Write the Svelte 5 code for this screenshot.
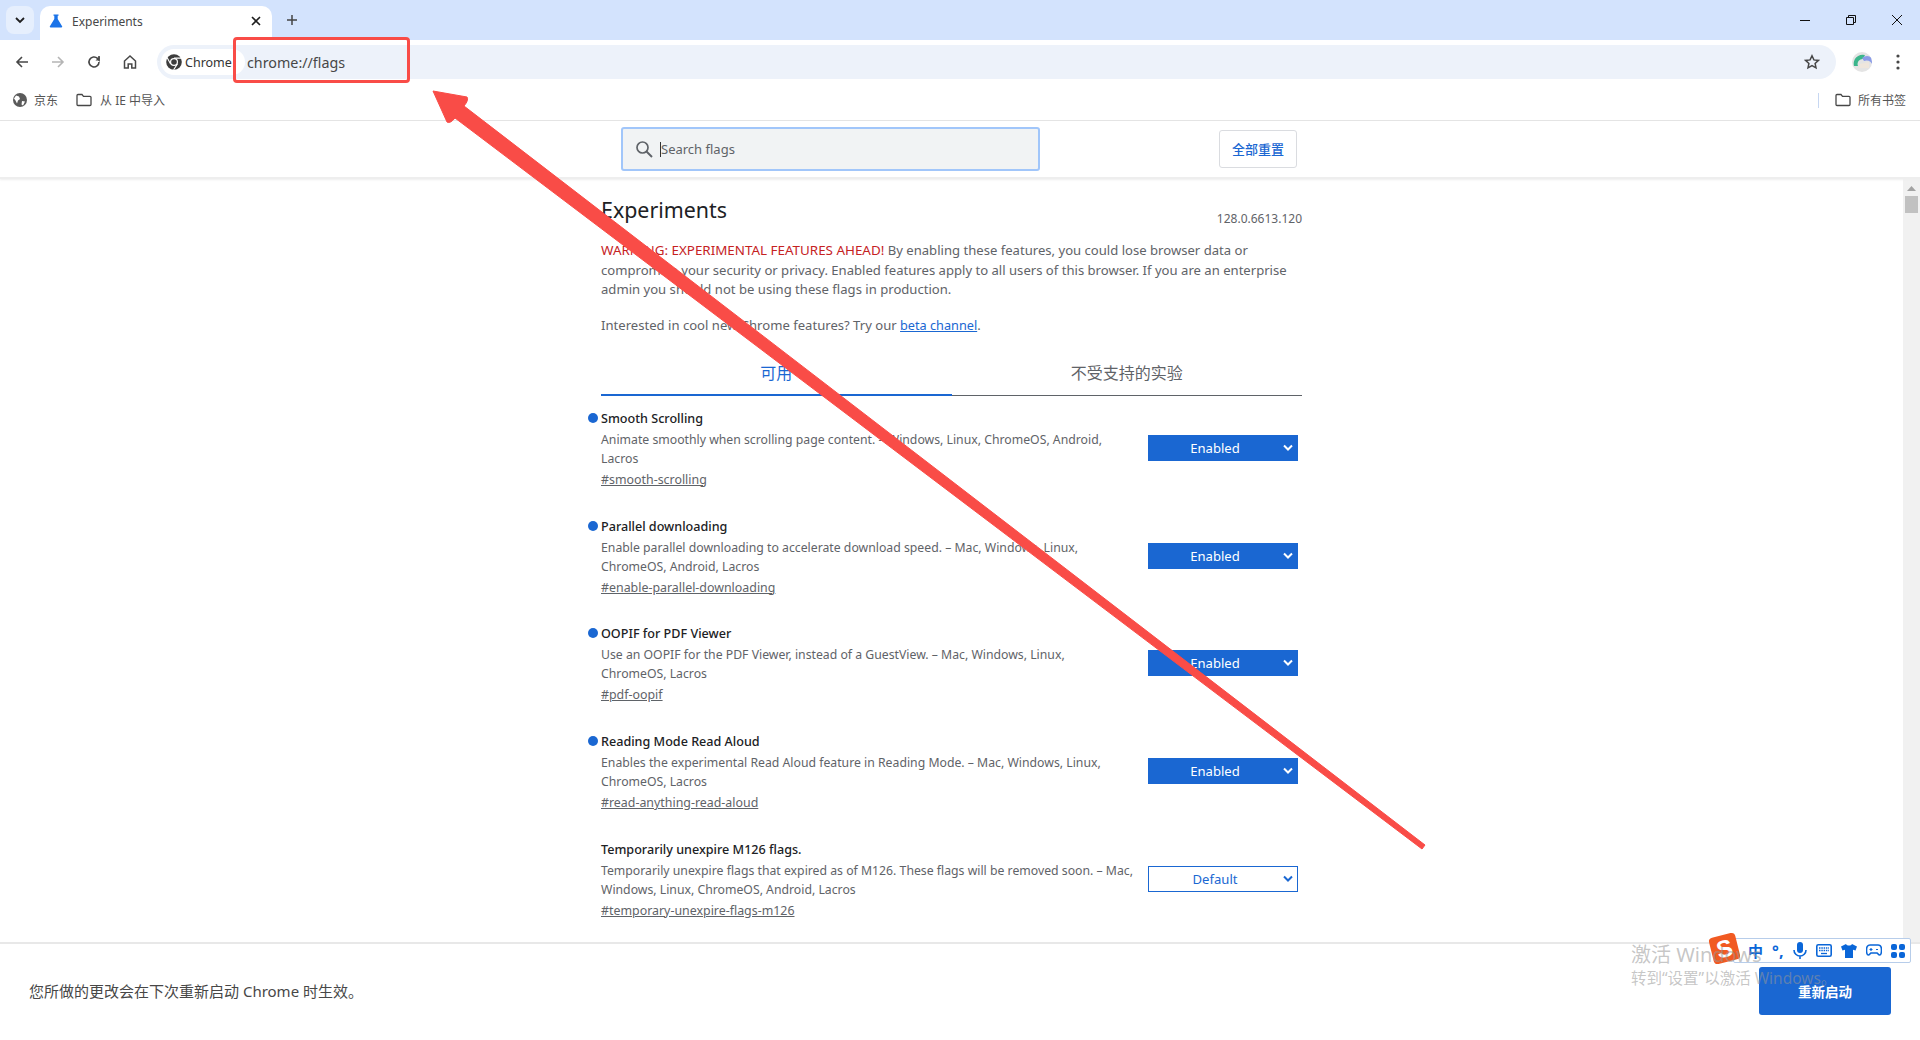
<script>
	const flags = [
		{ name: 'Smooth Scrolling', on: true, desc: 'Animate smoothly when scrolling page content. – Windows, Linux, ChromeOS, Android, Lacros', link: '#smooth-scrolling' },
		{ name: 'Parallel downloading', on: true, desc: 'Enable parallel downloading to accelerate download speed. – Mac, Windows, Linux, ChromeOS, Android, Lacros', link: '#enable-parallel-downloading' },
		{ name: 'OOPIF for PDF Viewer', on: true, desc: 'Use an OOPIF for the PDF Viewer, instead of a GuestView. – Mac, Windows, Linux,\nChromeOS, Lacros', link: '#pdf-oopif' },
		{ name: 'Reading Mode Read Aloud', on: true, desc: 'Enables the experimental Read Aloud feature in Reading Mode. – Mac, Windows, Linux, ChromeOS, Lacros', link: '#read-anything-read-aloud' },
		{ name: 'Temporarily unexpire M126 flags.', on: false, desc: 'Temporarily unexpire flags that expired as of M126. These flags will be removed soon. – Mac, Windows, Linux, ChromeOS, Android, Lacros', link: '#temporary-unexpire-flags-m126' }
	];
</script>

<div class="window">
	<div class="tabstrip">
		<div class="tabsearch">
			<svg width="12" height="12" viewBox="0 0 12 12"><path d="M2 4l4 4 4-4" fill="none" stroke="#1f1f1f" stroke-width="1.8"/></svg>
		</div>
		<div class="tab">
			<svg width="14" height="14" viewBox="0 0 14 14"><path d="M4.500 0.500h5v1.200h-.8v3.400l4.400 7.200c.4.700 0 1.200-.7 1.200H1.600c-.7 0-1.100-.5-.7-1.200l4.400-7.200V1.700h-.8z" fill="#1a73e8"/></svg>
			<span class="tabtitle">Experiments</span>
			<svg width="12" height="12" viewBox="0 0 12 12"><path d="M2 2l8 8M10 2l-8 8" stroke="#1f1f1f" stroke-width="1.600"/></svg>
		</div>
		<svg class="newtab" width="12" height="12" viewBox="0 0 12 12"><path d="M6 1v10M1 6h10" stroke="#444" stroke-width="1.500"/></svg>
		<div class="wincontrols">
			<svg width="12" height="12" viewBox="0 0 12 12"><path d="M1 6.500h10" stroke="#111" stroke-width="1"/></svg>
			<svg width="12" height="12" viewBox="0 0 12 12"><path d="M1.500 3.500h7v7h-7zM3.500 3.500v-2h7v7h-2" fill="none" stroke="#111" stroke-width="1"/></svg>
			<svg width="12" height="12" viewBox="0 0 12 12"><path d="M1 1l10 10M11 1L1 11" stroke="#111" stroke-width="1"/></svg>
		</div>
	</div>

	<div class="toolbar">
		<div class="navicons">
			<svg width="16" height="16" viewBox="0 0 16 16"><path d="M14 8H3M8 3L3 8l5 5" fill="none" stroke="#474747" stroke-width="1.600"/></svg>
			<svg width="16" height="16" viewBox="0 0 16 16"><path d="M2 8h11M8 3l5 5-5 5" fill="none" stroke="#b5b5b5" stroke-width="1.600"/></svg>
			<svg width="16" height="16" viewBox="0 0 16 16"><path d="M13 8a5 5 0 1 1-1.500-3.600L13 6V2" fill="none" stroke="#474747" stroke-width="1.600"/><path d="M13.600 6.600H9.500l4.100-4.100z" fill="#474747"/></svg>
			<svg width="16" height="16" viewBox="0 0 16 16"><path d="M8 2L2.500 7v7h3.700v-4h3.600v4h3.700V7z" fill="none" stroke="#474747" stroke-width="1.500"/></svg>
		</div>
		<div class="omnibox">
			<div class="chip">
				<svg width="16" height="16" viewBox="0 0 16 16"><circle cx="8" cy="8" r="7.800" fill="#3c3c3c"/><circle cx="8" cy="8" r="4" fill="#fff"/><circle cx="8" cy="8" r="2.800" fill="#3c3c3c"/><path d="M8 4.100h7.500M4.600 10L1.200 3.800M11.400 10L7.600 15.800" stroke="#fff" stroke-width="1.100"/></svg>
				<span>Chrome</span>
			</div>
			<span class="url">chrome://flags</span>
			<svg class="star" width="16" height="16" viewBox="0 0 16 16"><path d="M8 1.800l1.900 4.100 4.500.5-3.300 3 .9 4.500L8 11.700l-4 2.200.9-4.500-3.300-3 4.500-.5z" fill="none" stroke="#474747" stroke-width="1.500"/></svg>
		</div>
		<svg class="avatar" width="20" height="20" viewBox="0 0 20 20">
			<defs><clipPath id="av"><circle cx="10" cy="10" r="10"/></clipPath></defs>
			<g clip-path="url(#av)">
				<rect width="20" height="20" fill="#e4e4e4"/>
				<path d="M2 14a9 9 0 0 1 11-11l-2 4a5 5 0 0 0-5 7z" fill="#3cb68c"/>
				<path d="M10 6a8 8 0 0 1 10 0v6a6 6 0 0 0-8-3z" fill="#8a9be8"/>
				<path d="M8 12l9-2v6H7z" fill="#efe6dc"/>
			</g>
		</svg>
		<svg class="dots" width="4" height="16" viewBox="0 0 4 16"><circle cx="2" cy="2" r="1.600" fill="#474747"/><circle cx="2" cy="8" r="1.600" fill="#474747"/><circle cx="2" cy="14" r="1.600" fill="#474747"/></svg>
	</div>

	<div class="bookmarks">
		<div class="bm">
			<svg width="14" height="14" viewBox="0 0 14 14"><circle cx="7" cy="7" r="7" fill="#5a5a5a"/><path d="M3 2.500l3 1 1 2.500-2 1.500-1 3-1.500-3-1.500-2zM9 8l3 .5-2 4-1.500-1z" fill="#fff"/></svg>
			<span>京东</span>
		</div>
		<div class="bm">
			<svg width="16" height="14" viewBox="0 0 16 14"><path d="M1 2.500c0-.6.4-1 1-1h4l1.500 1.800H14c.6 0 1 .4 1 1V11.500c0 .6-.4 1-1 1H2c-.6 0-1-.4-1-1z" fill="none" stroke="#474747" stroke-width="1.300"/></svg>
			<span class="ie">从 IE 中导入</span>
		</div>
		<div class="bmright">
			<i class="bmsep"></i>
			<div class="bm">
				<svg width="16" height="14" viewBox="0 0 16 14"><path d="M1 2.500c0-.6.4-1 1-1h4l1.500 1.800H14c.6 0 1 .4 1 1V11.500c0 .6-.4 1-1 1H2c-.6 0-1-.4-1-1z" fill="none" stroke="#474747" stroke-width="1.300"/></svg>
				<span>所有书签</span>
			</div>
		</div>
	</div>

	<div class="flagshead">
		<div class="searchbox">
			<svg width="18" height="18" viewBox="0 0 18 18"><circle cx="7.500" cy="7.500" r="5.500" fill="none" stroke="#5f6368" stroke-width="1.700"/><path d="M11.500 11.500l5.500 5.500" stroke="#5f6368" stroke-width="1.900"/></svg>
			<i class="caret"></i>
			<span>Search flags</span>
		</div>
		<button class="resetall">全部重置</button>
	</div>

	<div class="body">
		<div class="content">
			<div class="column">
				<div class="titlerow">
					<h1>Experiments</h1>
					<span class="version">128.0.6613.120</span>
				</div>
				<p class="warning"><span class="red">WARNING: EXPERIMENTAL FEATURES AHEAD!</span> By enabling these features, you could lose browser data or compromise your security or privacy. Enabled features apply to all users of this browser. If you are an enterprise admin you should not be using these flags in production.</p>
				<p class="beta">Interested in cool new Chrome features? Try our <a href="#beta">beta channel</a>.</p>
				<div class="tabs">
					<div class="pagetab active">可用</div>
					<div class="pagetab">不受支持的实验</div>
				</div>
				{#each flags as flag}
					<div class="flag">
						<div class="flagtext">
							<div class="flagname" class:dot={flag.on}>{flag.name}</div>
							<div class="flagdesc">{flag.desc}</div>
							<a class="flaglink" href={flag.link}>{flag.link}</a>
						</div>
						<div class="select" class:enabled={flag.on}>
							<span>{flag.on ? 'Enabled' : 'Default'}</span>
							<svg width="10" height="8" viewBox="0 0 10 8"><path d="M1 1.500l4 4 4-4" fill="none" stroke="currentColor" stroke-width="2"/></svg>
						</div>
					</div>
				{/each}
			</div>
		</div>
		<div class="scrollbar">
			<svg width="9" height="5" viewBox="0 0 9 5"><path d="M4.500 0L9 5H0z" fill="#a3a3a3"/></svg>
			<div class="thumb"></div>
		</div>
	</div>

	<div class="needsrestart">
		<span class="restartmsg">您所做的更改会在下次重新启动 Chrome 时生效。</span>
		<button class="relaunch">重新启动</button>
	</div>

	<!-- annotation drawn on top of the screenshot -->
	<div class="redbox"></div>
	<svg class="arrow" width="1920" height="1040" viewBox="0 0 1920 1040">
		<path d="M433 91L467 97 Q469 100 464 106 L1425 845 1422 849 455 118 Q450 124 447 122 Z" fill="#f94c47" stroke="#f94c47" stroke-width="1" stroke-linejoin="round"/>
	</svg>

	<div class="imebar">
		<span class="imezh">中</span>
		<span class="imepunct">°,</span>
		<svg width="14" height="18" viewBox="0 0 14 18"><rect x="4" y="0" width="6" height="11" rx="3" fill="#0a66d8"/><path d="M1 8a6 6 0 0 0 12 0M7 14v3" fill="none" stroke="#0a66d8" stroke-width="1.600"/></svg>
		<svg width="16" height="13" viewBox="0 0 16 13"><rect x=".8" y=".8" width="14.400" height="11.400" rx="1.500" fill="none" stroke="#0a66d8" stroke-width="1.600"/><path d="M3 4h10M3 6.500h10" stroke="#0a66d8" stroke-width="1.300" stroke-dasharray="1.500 .8"/><path d="M5 9.500h6" stroke="#0a66d8" stroke-width="1.300"/></svg>
		<svg width="16" height="14" viewBox="0 0 16 14"><path d="M5 0L0 2.500l1.500 4L4 5.800V14h8V5.800l2.500.7 1.500-4L11 0C10 2 6 2 5 0z" fill="#0a66d8"/></svg>
		<svg width="16" height="14" viewBox="0 0 16 14"><path d="M4 1h8c2.500 0 3.500 2 3.500 5s-.5 5-2 5c-1 0-1.500-1.500-2.500-2H5c-1 .5-1.500 2-2.500 2s-2-2-2-5S1.500 1 4 1z" fill="none" stroke="#0a66d8" stroke-width="1.600"/><path d="M3.500 5.500h3M5 4v3M10 5.500h2" stroke="#0a66d8" stroke-width="1.200"/></svg>
		<svg width="14" height="14" viewBox="0 0 14 14"><rect width="6" height="6" rx="2" fill="#0a66d8"/><rect x="8" width="6" height="6" rx="2" fill="#0a66d8"/><rect y="8" width="6" height="6" rx="2" fill="#0a66d8"/><rect x="8" y="8" width="6" height="6" rx="2" fill="#0a66d8"/></svg>
	</div>

	<div class="sogou"><span>S</span></div>

	<div class="watermark">
		<div class="wm1">激活 Windows</div>
		<div class="wm2">转到“设置”以激活 Windows。</div>
	</div>
</div>

<style>
	:global(body) {
		margin: 0;
		background: #fff;
	}

	.window {
		position: relative;
		display: flex;
		flex-direction: column;
		width: 1920px;
		height: 1040px;
		overflow: hidden;
		font-family: "Noto Sans", "Noto Sans CJK SC", sans-serif;
		color: #5f6368;
	}

	.tabstrip {
		display: flex;
		align-items: flex-end;
		height: 40px;
		padding-left: 6px;
		background: #d3e3fd;
		flex: none;
	}

	.tabsearch {
		display: flex;
		align-items: center;
		justify-content: center;
		width: 28px;
		height: 28px;
		margin-bottom: 6px;
		border-radius: 8px;
		background: #e6effd;
	}

	.tab {
		display: flex;
		align-items: center;
		width: 232px;
		height: 34px;
		margin-left: 6px;
		padding: 0 10px 4px 9px;
		box-sizing: border-box;
		background: #fff;
		border-radius: 10px 10px 0 0;
	}

	.tabtitle {
		flex: 1;
		margin-left: 9px;
		font-size: 12px;
		color: #474747;
	}

	.newtab {
		margin: 0 0 14px 14px;
	}

	.wincontrols {
		display: flex;
		gap: 34px;
		margin-left: auto;
		padding: 0 17px 14px 0;
	}

	.toolbar {
		display: flex;
		align-items: center;
		height: 40px;
		flex: none;
		background: #fff;
		padding-left: 14px;
		box-sizing: border-box;
	}

	.navicons {
		display: flex;
		gap: 20px;
		width: 143px;
		margin-top: 4px;
	}

	.omnibox {
		display: flex;
		align-items: center;
		width: 1679px;
		height: 34px;
		margin-top: 4px;
		padding-left: 4px;
		box-sizing: border-box;
		background: #edf2fa;
		border-radius: 17px;
		font-size: 14.300px;
		color: #474747;
	}

	.chip {
		display: flex;
		align-items: center;
		gap: 3px;
		width: 84px;
		height: 26px;
		padding-left: 5px;
		box-sizing: border-box;
		background: #fff;
		border-radius: 13px;
		font-size: 12.500px;
		color: #333;
	}

	.url {
		margin-left: 2px;
		flex: 1;
	}

	.star {
		margin-right: 16px;
	}

	.avatar {
		margin: 4px 0 0 16px;
	}

	.dots {
		margin: 4px 0 0 24px;
	}

	.bookmarks {
		display: flex;
		align-items: center;
		gap: 18px;
		height: 41px;
		padding: 0 14px 0 13px;
		box-sizing: border-box;
		flex: none;
		background: #fff;
		border-bottom: 1px solid #e3e3e3;
		font-size: 12px;
		color: #555;
	}

	.bm {
		display: flex;
		align-items: center;
		gap: 7px;
	}

	.ie {
		margin-left: 1px;
	}

	.bmright {
		display: flex;
		align-items: center;
		gap: 16px;
		margin-left: auto;
	}

	.bmsep {
		width: 1px;
		height: 15px;
		background: #c7d7f2;
	}

	.flagshead {
		display: flex;
		align-items: center;
		height: 58px;
		padding-left: 621px;
		box-sizing: border-box;
		flex: none;
		background: #fff;
		border-bottom: 2px solid #eee;
		box-shadow: 0 1px 2px #eee;
		z-index: 1;
	}

	.searchbox {
		display: flex;
		align-items: center;
		width: 419px;
		height: 44px;
		padding-left: 12px;
		box-sizing: border-box;
		background: #f1f3f4;
		border: 2px solid #a1c6fa;
		border-radius: 3px;
		font-size: 13px;
		color: #5f6368;
	}

	.caret {
		width: 1px;
		height: 15px;
		margin-left: 7px;
		background: #333;
	}

	.resetall {
		width: 78px;
		height: 38px;
		margin-left: 179px;
		padding: 0 0 2px;
		background: #fff;
		border: 1px solid #dadce0;
		border-radius: 3px;
		font: 500 13px "Noto Sans CJK SC", sans-serif;
		color: #1a67d2;
	}

	.body {
		display: flex;
		flex: 1;
		min-height: 0;
	}

	.content {
		flex: 1;
		overflow: hidden;
		padding-left: 601px;
	}

	.column {
		width: 701px;
		font-size: 13.100px;
	}

	.titlerow {
		display: flex;
		align-items: flex-end;
		justify-content: space-between;
		height: 56px;
	}

	h1 {
		margin: 0;
		font-size: 21.400px;
		font-weight: 400;
		line-height: 50px;
		color: #202124;
	}

	.version {
		font-size: 12px;
		line-height: 20px;
		padding-bottom: 6px;
	}

	.warning {
		margin: 6px 0 0;
		font-size: 13.100px;
		line-height: 19.600px;
		color: #5f6368;
		width: 695px;
	}

	.red {
		font-size: 13.400px;
		color: #c5221f;
	}

	.beta {
		margin: 15px 0 0;
		line-height: 20px;
	}

	.beta a {
		font-size: 12.700px;
		color: #1a67d2;
	}

	.tabs {
		display: flex;
		margin-top: 16px;
		height: 45px;
	}

	.pagetab {
		flex: 1;
		padding-top: 10px;
		box-sizing: border-box;
		text-align: center;
		font-size: 16px;
		line-height: 24px;
		border-bottom: 1px solid #5f6368;
		color: #5f6368;
	}

	.pagetab.active {
		color: #1a67d2;
		border-bottom: 2px solid #1a67d2;
	}

	.flag {
		display: flex;
		justify-content: space-between;
		height: 107.800px;
	}

	.flagtext {
		width: 533px;
		padding-top: 13px;
	}

	.flagname {
		position: relative;
		font-size: 12.600px;
		font-weight: 500;
		line-height: 20px;
		color: #202124;
	}

	.dot::before {
		content: '';
		position: absolute;
		left: -13px;
		top: 4px;
		width: 10px;
		height: 10px;
		border-radius: 50%;
		background: #1a67d2;
	}

	.flagdesc {
		margin-top: 1px;
		font-size: 12.250px;
		line-height: 19px;
		white-space: pre-line;
	}

	.flaglink {
		display: inline-block;
		margin-top: 2px;
		font-size: 12.400px;
		line-height: 20px;
		color: #5f6368;
	}

	.select {
		position: relative;
		display: flex;
		align-items: center;
		width: 150px;
		height: 26px;
		margin: 39px 4px 0 0;
		box-sizing: border-box;
		border: 1px solid #1a67d2;
		color: #1a67d2;
	}

	.select span {
		flex: 1;
		padding-right: 16px;
		text-align: center;
	}

	.select svg {
		position: absolute;
		right: 4px;
		top: 8px;
	}

	.select.enabled {
		background: #1a67d2;
		color: #fff;
	}

	.scrollbar {
		display: flex;
		flex-direction: column;
		align-items: center;
		width: 17px;
		background: #f1f1f1;
		padding-top: 7px;
		box-sizing: border-box;
	}

	.thumb {
		width: 13px;
		height: 17px;
		margin-top: 5px;
		background: #c1c1c1;
	}

	.needsrestart {
		display: flex;
		align-items: center;
		justify-content: space-between;
		height: 98px;
		padding: 0 29px;
		box-sizing: border-box;
		flex: none;
		background: #fff;
		border-top: 2px solid #e8e8e8;
		font-size: 15px;
		color: #474747;
	}

	.restartmsg {
		margin-top: -4px;
	}

	.relaunch {
		width: 132px;
		height: 48px;
		margin-top: -2px;
		padding: 0;
		background: #1a67d2;
		border: none;
		border-radius: 3px;
		font: 700 13.500px "Noto Sans CJK SC", sans-serif;
		color: #fff;
	}

	.redbox {
		position: absolute;
		left: 233px;
		top: 37px;
		width: 177px;
		height: 46px;
		box-sizing: border-box;
		border: 3px solid #f94c47;
		border-radius: 4px;
		z-index: 2;
	}

	.arrow {
		position: absolute;
		left: 0;
		top: 0;
		pointer-events: none;
		z-index: 2;
	}

	.watermark {
		position: absolute;
		left: 1631px;
		top: 942px;
		color: rgba(150, 150, 150, 0.55);
		z-index: 2;
	}

	.wm1 {
		font-size: 20px;
		line-height: 26px;
	}

	.wm2 {
		font-size: 15.500px;
		line-height: 20px;
	}

	.imebar {
		position: absolute;
		left: 1733px;
		top: 938px;
		display: flex;
		align-items: center;
		justify-content: space-between;
		width: 178px;
		height: 25px;
		padding: 0 5px 0 14px;
		box-sizing: border-box;
		background: #fff;
		border: 1px solid #b7cdea;
		border-radius: 2px;
		z-index: 2;
	}

	.imezh {
		font-size: 15px;
		font-weight: 700;
		color: #0a66d8;
	}

	.imepunct {
		font-size: 16px;
		font-weight: 700;
		line-height: 16px;
		color: #0a66d8;
	}

	.sogou {
		position: absolute;
		left: 1711px;
		top: 935px;
		display: flex;
		align-items: center;
		justify-content: center;
		width: 27px;
		height: 27px;
		background: #f15a22;
		border-radius: 4px;
		transform: rotate(-14deg);
		font: 700 24px "Liberation Sans", sans-serif;
		color: #fff;
		z-index: 2;
	}
</style>
